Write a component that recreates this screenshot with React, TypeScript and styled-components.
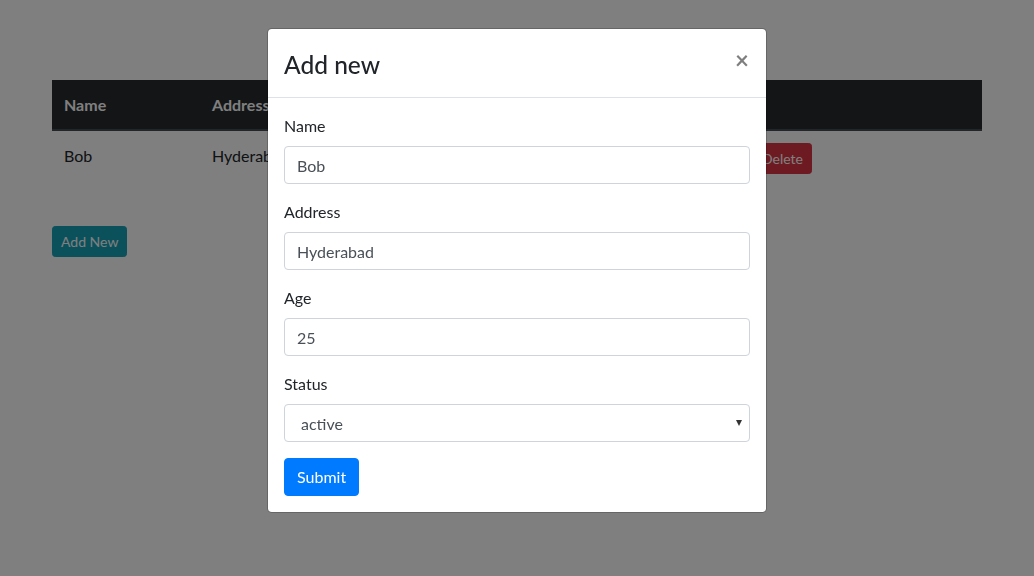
import React from "react";
import styled, { createGlobalStyle } from "styled-components";

const Global = createGlobalStyle`
  * { box-sizing: border-box; }
  html, body { margin: 0; padding: 0; }
  body {
    font-family: Lato, "Open Sans", sans-serif;
    font-size: 16px;
    line-height: 1.5;
    color: #212529;
    background: #fff;
    height: 576px;
    overflow: hidden;
  }
`;

const Container = styled.div`
  width: 960px;
  margin: 0 auto;
  padding: 80px 15px 0;
`;

const Table = styled.table`
  width: 100%;
  border-collapse: collapse;
  margin-bottom: 41px;
  table-layout: fixed;
`;

const Th = styled.th<{ $w?: number }>`
  width: ${(p) => (p.$w ? `${p.$w}px` : "auto")};
  height: 50px;
  text-align: left;
  padding: 12px 12px 12px;
  font-weight: 700;
  color: #fff;
  background: #262a2e;
  border-bottom: 2px solid #454d55;
`;

const Td = styled.td`
  padding: 13px 12px 11px;
  vertical-align: top;
  border-top: 1px solid #dee2e6;
`;

const ActionTd = styled(Td)`
  padding-top: 12px;
`;

const Button = styled.button<{ $variant: "info" | "danger" | "primary"; $size?: "sm" }>`
  display: inline-block;
  border: 1px solid transparent;
  font-family: inherit;
  color: #fff;
  cursor: pointer;
  background: ${(p) =>
    p.$variant === "info" ? "#17a2b8" : p.$variant === "danger" ? "#dc3545" : "#007bff"};
  border-color: ${(p) =>
    p.$variant === "info" ? "#17a2b8" : p.$variant === "danger" ? "#dc3545" : "#007bff"};
  font-size: ${(p) => (p.$size === "sm" ? "14px" : "16px")};
  line-height: 1.5;
  padding: ${(p) => (p.$size === "sm" ? "4px 8px" : "6px 12px")};
  border-radius: ${(p) => (p.$size === "sm" ? "3.2px" : "4px")};
`;

const Backdrop = styled.div`
  position: fixed;
  inset: 0;
  background: rgba(0, 0, 0, 0.5);
`;

const ModalWrap = styled.div`
  position: fixed;
  inset: 0;
  display: flex;
  justify-content: center;
  align-items: flex-start;
  padding-top: 28px;
`;

const Modal = styled.div`
  width: 500px;
  background: #fff;
  border: 1px solid rgba(0, 0, 0, 0.2);
  border-radius: 4.8px;
  background-clip: padding-box;
`;

const Header = styled.div`
  display: flex;
  align-items: flex-start;
  justify-content: space-between;
  padding: 16px;
  border-bottom: 1px solid #dee2e6;
`;

const Title = styled.h4`
  margin: 2px 0 -2px;
  font-size: 24.5px;
  font-weight: 500;
  line-height: 36px;
`;

const Close = styled.button`
  padding: 19px 17px 13px 16px;
  margin: -16px -16px -16px auto;
  background: transparent;
  border: 0;
  font-family: inherit;
  font-size: 24px;
  font-weight: 700;
  line-height: 1;
  color: #000;
  opacity: 0.5;
  text-shadow: 0 1px 0 #fff;
  cursor: pointer;
`;

const Body = styled.div`
  padding: 16px;
`;

const Group = styled.div`
  margin-bottom: 16px;
`;

const Label = styled.label`
  display: block;
  margin-bottom: 8px;
`;

const Input = styled.input`
  display: block;
  width: 100%;
  height: 38px;
  padding: 6px 12px;
  font-family: inherit;
  font-size: 16px;
  line-height: 1.5;
  color: #495057;
  background: #fff;
  border: 1px solid #ced4da;
  border-radius: 4px;
`;

const SelectWrap = styled.div`
  position: relative;
  &::after {
    content: "";
    position: absolute;
    right: 8px;
    top: 16px;
    border-left: 3.5px solid transparent;
    border-right: 3.5px solid transparent;
    border-top: 6px solid #333;
  }
`;

const Select = styled.select`
  display: block;
  width: 100%;
  height: 38px;
  padding: 7px 12px 5px 16px;
  font-family: inherit;
  font-size: 16px;
  line-height: 1.5;
  color: #495057;
  background: #fff;
  border: 1px solid #ced4da;
  border-radius: 4px;
  appearance: none;
`;

export default function App() {
  return (
    <>
      <Global />
      <Container>
        <Table>
          <thead>
            <tr>
              <Th $w={148}>Name</Th>
              <Th $w={184}>Address</Th>
              <Th $w={184}>Age</Th>
              <Th $w={173}>Status</Th>
              <Th></Th>
            </tr>
          </thead>
          <tbody>
            <tr>
              <Td>Bob</Td>
              <Td>Hyderabad</Td>
              <Td>25</Td>
              <Td>active</Td>
              <ActionTd>
                <Button $variant="danger" $size="sm">Delete</Button>
              </ActionTd>
            </tr>
          </tbody>
        </Table>
        <Button $variant="info" $size="sm">Add New</Button>
      </Container>
      <Backdrop />
      <ModalWrap>
        <Modal>
          <Header>
            <Title>Add new</Title>
            <Close aria-label="Close">×</Close>
          </Header>
          <Body>
            <Group>
              <Label>Name</Label>
              <Input defaultValue="Bob" />
            </Group>
            <Group>
              <Label>Address</Label>
              <Input defaultValue="Hyderabad" />
            </Group>
            <Group>
              <Label>Age</Label>
              <Input defaultValue="25" />
            </Group>
            <Group>
              <Label>Status</Label>
              <SelectWrap>
                <Select defaultValue="active">
                  <option value="active">active</option>
                  <option value="inactive">inactive</option>
                </Select>
              </SelectWrap>
            </Group>
            <Button $variant="primary">Submit</Button>
          </Body>
        </Modal>
      </ModalWrap>
    </>
  );
}
